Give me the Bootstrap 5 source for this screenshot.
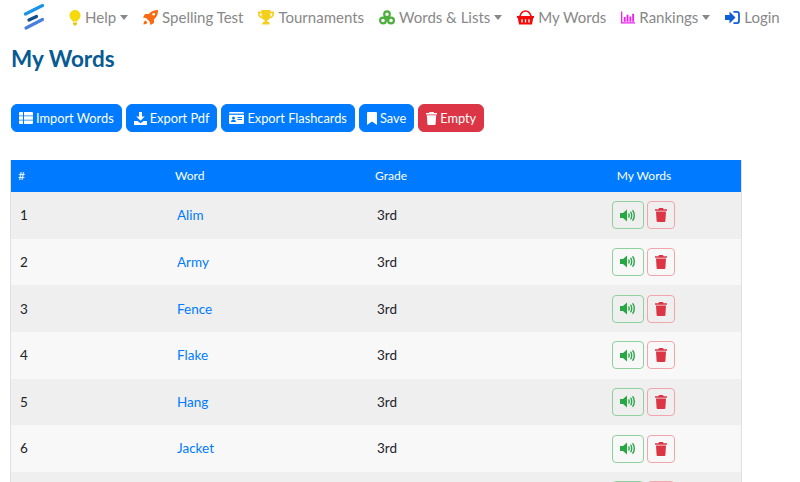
<!DOCTYPE html>
<html lang="en"><head><meta charset="utf-8"><title>My Words</title>
<link href="https://cdn.jsdelivr.net/npm/bootstrap@5.3.0/dist/css/bootstrap.min.css" rel="stylesheet">
<style>
html,body{overflow:hidden;height:482px}
body{font-family:"Lato","Open Sans",sans-serif;font-size:13.5px;color:#212529;background:#fff}
.topbar{height:36px;padding:0 0 1px 23px}
.brandmark{width:23px;height:27px;margin-right:23px;display:block}
.navlinks{gap:15px;margin:0;padding:0;list-style:none}
.navitem{color:#888;font-size:15px;display:flex;align-items:center;gap:4px;text-decoration:none;white-space:nowrap}
.navitem.dropdown-toggle::after{margin-left:0;vertical-align:middle;border-top-width:5px;border-left-width:4px;border-right-width:4px}
.pagehead{color:#075a92;font-size:22.500px;font-weight:700;margin:0;padding:9px 0 0 11px;line-height:27px}
.toolbar{gap:4px;padding:32px 0 0 11px}
.toolbtn{font-size:12.800px;height:28px;padding:0 7px;display:flex;align-items:center;gap:3px;background:#007bff;border-color:#007bff;line-height:1}
.toolbtn.btn-danger{background:#dc3545;border-color:#dc3545}
.wordswrap{width:732px;margin:28px 0 0 10px;border-right:1px solid #dee2e6;border-left:1px solid #dee2e6}
.wordtable{margin:0;table-layout:fixed;width:100%;font-size:13.500px;--bs-table-striped-bg:transparent}
.wordtable th{background:#007bff;color:#fff;font-weight:400;font-size:12px;height:32px;padding:0 7px;vertical-align:middle;border:0}
.wordtable td{height:46.67px;padding:0 9px;vertical-align:middle;border:0;background:#f8f8f8;box-shadow:none}
.wordtable tbody tr:nth-child(odd) td{background:#efefef}
.wordtable a{color:#007bff;text-decoration:none}
.rowbtn{width:28px;height:28px;padding:0;display:inline-flex;align-items:center;justify-content:center;border-radius:4px;background:transparent}
.rowbtn.sound{width:32px;border:1px solid #8fd19e}
.rowbtn.trash{border:1px solid #f1a5ac}
.rowgroup{gap:3px;padding-right:2px}
</style></head>
<body>
<nav class="navbar navbar-expand topbar d-flex align-items-center justify-content-start">
<svg class="brandmark" viewBox="0 0 23 27"><path d="M2.500 10 19.500 1.500" stroke="#1a94e6" stroke-width="3.200" stroke-linecap="round"/><path d="M6 16 13.500 12.500" stroke="#124e8c" stroke-width="3.200" stroke-linecap="round"/><path d="M3 24 19.500 15.500" stroke="#4a7fe0" stroke-width="3.200" stroke-linecap="round"/></svg>
<ul class="d-flex align-items-center navlinks">
<li><a class="navitem dropdown-toggle" href="#"><svg width="12" height="16" viewBox="0 0 12 16"><path d="M6 0a5.500 5.500 0 0 0-3.500 9.700C3.300 10.500 3.600 11 3.700 11.500h4.600c.1-.5.4-1 1.200-1.800A5.500 5.500 0 0 0 6 0z" fill="#f5d90a"/><path d="M4 12.500h4v1.200L7 15.500H5L4 13.700z" fill="#e9c80a"/></svg>Help</a></li>
<li><a class="navitem" href="#"><svg width="15" height="15" viewBox="0 0 15 15"><path d="M15 0c.2 4-1.200 7-4 9.200V13l-3.500 2-1-3.500-3.200-3.200L0 7.500 2 4h3.800C8 1.300 11 0 15 0z" fill="#f96a14"/><circle cx="10.700" cy="4.300" r="1.300" fill="#fff"/><path d="M2.500 10.500c-1.300.5-2 2-2 4 2 0 3.500-.7 4-2z" fill="#f96a14"/></svg>Spelling Test</a></li>
<li><a class="navitem" href="#"><svg width="16" height="15" viewBox="0 0 16 15"><path d="M3.500 0h9v1.500H16V4c0 2.500-2 4-4.200 4.400-.6.900-1.300 1.400-2.300 1.700V12H11.500v2.500h-7V12h2V10.100c-1-.3-1.700-.8-2.300-1.700C2 8 0 6.500 0 4V1.500h3.500zM1.700 3.200V4c0 1.200.9 2.200 2.200 2.700-.3-1-.4-2.200-.4-3.500zm12.600 0h-1.800c0 1.300-.1 2.500-.4 3.500 1.300-.5 2.200-1.500 2.200-2.700z" fill="#f5cf1e"/></svg>Tournaments</a></li>
<li><a class="navitem dropdown-toggle" href="#"><svg width="16" height="15" viewBox="0 0 16 15"><circle cx="8" cy="4.200" r="2.800" fill="#fff" stroke="#4caf3c" stroke-width="2.200"/><circle cx="4" cy="10.500" r="2.900" fill="#fff" stroke="#4caf3c" stroke-width="2.200"/><circle cx="12" cy="10.500" r="2.900" fill="#fff" stroke="#4caf3c" stroke-width="2.200"/><circle cx="8" cy="8.200" r="1.500" fill="#4caf3c"/></svg>Words &amp; Lists</a></li>
<li><a class="navitem" href="#"><svg width="17" height="15" viewBox="0 0 17 15"><path d="M2.800 6.500C4 2.500 6 1 8.500 1s4.500 1.500 5.700 5.500" stroke="#f50a0a" stroke-width="1.600" fill="none"/><path d="M0 6h17v2h-.8L15 14.500H2L.8 8H0z" fill="#f50a0a"/><path d="M5 9.200v3.400M8.500 9.200v3.400M12 9.200v3.400" stroke="#fff" stroke-width="1.300"/></svg>My Words</a></li>
<li><a class="navitem dropdown-toggle" href="#"><svg width="14" height="13" viewBox="0 0 15 13"><path d="M.7 0v12.300H15" stroke="#f01ff0" stroke-width="1.400" fill="none"/><path d="M3 6h2v5H3zM6 3.500h2V11H6zM9 5.500h2V11H9zM12 2.500h2V11h-2z" fill="#f01ff0"/></svg>Rankings</a></li>
<li><a class="navitem" href="#"><svg width="15" height="13" viewBox="0 0 15 13"><path d="M0 4h4.500V.5L10.500 6.500 4.500 12.500V9H0z" fill="#0f5fd6"/><path d="M8.500.9h3.500a2 2 0 0 1 2 2v7.200a2 2 0 0 1-2 2H8.500" stroke="#0f5fd6" stroke-width="1.800" fill="none"/></svg>Login</a></li>
</ul>
</nav>
<h1 class="pagehead">My Words</h1>
<div class="d-flex toolbar">
<button class="btn btn-primary toolbtn"><svg width="14" height="12" viewBox="0 0 14 12" fill="#fff"><path d="M0 1a1 1 0 0 1 1-1h3v3.400H0zM5 0h8a1 1 0 0 1 1 1v2.400H5zM0 4.300h4v3.400H0zM5 4.300h9v3.400H5zM0 8.600h4V12H1a1 1 0 0 1-1-1zM5 8.600h9V11a1 1 0 0 1-1 1H5z"/></svg>Import Words</button>
<button class="btn btn-primary toolbtn"><svg width="13" height="13" viewBox="0 0 13 13" fill="#fff"><path d="M5 0h3v4.500h2.700L6.500 8.800 2.300 4.500H5z"/><path d="M0 9h3.500l3 2.200 3-2.200H13v4H0z"/></svg>Export Pdf</button>
<button class="btn btn-primary toolbtn"><svg width="15" height="12" viewBox="0 0 15 12"><rect width="15" height="12" rx="1.300" fill="#fff"/><rect y="1.600" width="15" height="1.200" fill="#007bff"/><circle cx="4.500" cy="6" r="1.500" fill="#007bff"/><path d="M2 10c0-1.500 1-2.200 2.500-2.200S7 8.500 7 10zM8.500 5H13v1H8.500zM8.500 7H13v1H8.500z" fill="#007bff"/></svg>Export Flashcards</button>
<button class="btn btn-primary toolbtn"><svg width="10" height="13" viewBox="0 0 10 13"><path d="M0 1a1 1 0 0 1 1-1h8a1 1 0 0 1 1 1v12L5 9.500 0 13z" fill="#fff"/></svg>Save</button>
<button class="btn btn-danger toolbtn"><svg width="11" height="13" viewBox="0 0 11 13" fill="#fff"><path d="M3.500 0h4l.6 1H11v1.400H0V1h2.900zM.8 3.200h9.400l-.6 8.800a1 1 0 0 1-1 1H2.400a1 1 0 0 1-1-1z"/></svg>Empty</button>
</div>
<div class="wordswrap">
<table class="table wordtable">
<colgroup><col style="width:157px"><col style="width:200px"><col style="width:179px"><col></colgroup>
<thead><tr><th>#</th><th>Word</th><th>Grade</th><th class="text-center">My Words</th></tr></thead>
<tbody id="rows"></tbody>
</table>
</div>
<script src="https://cdn.jsdelivr.net/npm/bootstrap@5.3.0/dist/js/bootstrap.bundle.min.js"></script>
<script>
var words=["Alim","Army","Fence","Flake","Hang","Jacket","Jolly"];
var snd='<svg width="16" height="13" viewBox="0 0 16 13"><path d="M0 4h3L7 .5v12L3 9H0z" fill="#28a745"/><path d="M8.500 4.500c.9.700.9 3.300 0 4M10.500 2.800c1.600 1.300 1.600 6.100 0 7.400M12.500 1.200c2.400 2.200 2.400 8.400 0 10.600" stroke="#28a745" stroke-width="1.400" fill="none"/></svg>';
var tr='<svg width="12" height="14" viewBox="0 0 12 14" fill="#dc3545"><path d="M4 0h4l.6 1.200H12v1.500H0V1.200h3.400zM1 3.500h10l-.6 9.500a1 1 0 0 1-1 1H2.600a1 1 0 0 1-1-1z"/></svg>';
document.getElementById('rows').innerHTML=words.map(function(w,i){return '<tr><td>'+(i+1)+'</td><td><a href="#">'+w+'</a></td><td>3rd</td><td><div class="d-flex justify-content-center rowgroup"><button class="btn rowbtn sound">'+snd+'</button><button class="btn rowbtn trash">'+tr+'</button></div></td></tr>';}).join('');
</script>
</body></html>
